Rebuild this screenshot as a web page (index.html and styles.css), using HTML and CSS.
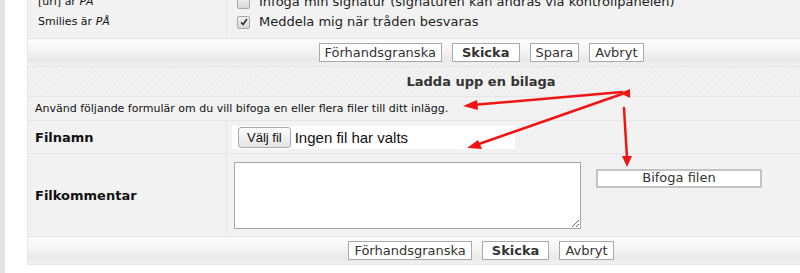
FILE: index.html
```html
<!DOCTYPE html>
<html>
<head>
<meta charset="UTF-8">
<title>Ladda upp en bilaga</title>
<link rel="stylesheet" href="styles.css">
</head>
<body>
<div class="page">
	<div class="rail"></div>
	<table class="form">
		<colgroup>
			<col class="col_label">
			<col>
		</colgroup>
		<tr class="opts_row">
			<td class="label_cell small">
				<div>[url] är <i>PÅ</i></div>
				<div>Smilies är <i>PÅ</i></div>
			</td>
			<td class="opts_cell">
				<div class="opt"><span class="check"></span>Infoga min signatur (signaturen kan ändras via kontrollpanelen)</div>
				<div class="opt"><span class="check on"><svg viewBox="0 0 12 12" width="10" height="10"><path d="M2.5 6.5 L5 9 L9.5 2.5" fill="none" stroke="#333" stroke-width="2"/></svg></span>Meddela mig när tråden besvaras</div>
			</td>
		</tr>
		<tr class="btn_row">
			<td colspan="2">
				<div class="buttons">
					<button class="btn">Förhandsgranska</button>
					<button class="btn bold">Skicka</button>
					<button class="btn">Spara</button>
					<button class="btn">Avbryt</button>
				</div>
			</td>
		</tr>
		<tr class="head_row">
			<th colspan="2">Ladda upp en bilaga</th>
		</tr>
		<tr class="desc_row">
			<td colspan="2" class="small">Använd följande formulär om du vill bifoga en eller flera filer till ditt inlägg.</td>
		</tr>
		<tr class="file_row">
			<td class="label_cell"><b>Filnamn</b></td>
			<td class="field_cell">
				<div class="file_box"><span class="file_btn">Välj fil</span><span class="file_txt">Ingen fil har valts</span></div>
			</td>
		</tr>
		<tr class="comment_row">
			<td class="label_cell"><b>Filkommentar</b></td>
			<td class="field_cell">
				<div class="comment_wrap">
					<textarea class="comment"></textarea>
					<button class="btn wide">Bifoga filen</button>
				</div>
			</td>
		</tr>
		<tr class="btn_row last">
			<td colspan="2">
				<div class="buttons">
					<button class="btn">Förhandsgranska</button>
					<button class="btn bold">Skicka</button>
					<button class="btn">Avbryt</button>
				</div>
			</td>
		</tr>
	</table>
</div>

<svg class="arrows" width="800" height="273" viewBox="0 0 800 273">
	<g stroke="#f01414" stroke-width="2.5" fill="none" stroke-linecap="round">
		<path d="M622 92 L472 105"/>
		<path d="M622 94 L476 145"/>
		<path d="M624 108 L627 158"/>
	</g>
	<g fill="#f01414">
		<polygon points="463,106 477,100 478,110"/>
		<polygon points="467,148 478,140 482,149"/>
		<polygon points="627,167 622,156 632,156"/>
		<polygon points="620,93 630,89 630,98"/>
	</g>
</svg>
</body>
</html>
```
FILE: styles.css
```css
body{
	margin: 0px;
	padding: 0px;
	background-color: white;
	overflow: hidden;
	font-family: "DejaVu Sans", Verdana, sans-serif;
	color: #111;
}

.page{
	display: flex;
	align-items: flex-start;
	gap: 22px;
	margin-top: -15px;
}

.rail{
	width: 5px;
	height: 320px;
	flex: none;
	background-color: #e4e4e4;
}

.arrows{
	position: absolute;
	top: 0px;
	left: 0px;
	pointer-events: none;
}

.form{
	flex: none;
	width: 908px;
	border-collapse: collapse;
	border: 1px solid #e0e0e0;
	table-layout: fixed;
}

.col_label{
	width: 199px;
}

.form td, .form th{
	border: 1px solid #e6e6e6;
	background-color: #f2f2f2;
	padding: 0px;
	vertical-align: middle;
}

.small{
	font-size: 11px;
}

.label_cell{
	padding-left: 7px !important;
}

.opts_row td{
	padding: 6px 10px !important;
	line-height: 20px;
	height: 40px;
}

.opts_cell{
	font-size: 13px;
	color: #222;
}

.opt{
	display: flex;
	align-items: center;
	gap: 9px;
}

.check{
	width: 11px;
	height: 11px;
	border: 1px solid #a8a8a8;
	border-radius: 2px;
	background: linear-gradient(#f4f4f4, #d8d8d8);
	display: flex;
	align-items: center;
	justify-content: center;
}

.btn_row td{
	height: 27px;
	background: linear-gradient(#fdfdfd, #f3f3f3 45%, #e9e9e9 75%, #f1f1f1);
}

.btn_row.last td{
	height: 27px;
}

.buttons{
	display: flex;
	justify-content: center;
	gap: 10px;
}

.btn{
	font-family: "DejaVu Sans", Verdana, sans-serif;
	font-size: 13px;
	color: #333;
	background-color: white;
	border: 1px solid #a9a9a9;
	padding: 0px 5px;
	height: 19px;
	line-height: 16px;
}

.bold{
	font-weight: bold;
	padding: 0px 9px;
}

.head_row th{
	height: 29px;
	font-size: 13px;
	color: #333;
	background: repeating-linear-gradient(135deg, #ededed 0px, #ededed 2px, #f4f4f4 2px, #f4f4f4 4px);
}

.desc_row td{
	height: 23px;
	padding-left: 7px;
	color: #111;
}

.file_row td{
	height: 32px;
	font-size: 13px;
}

.field_cell{
	padding-left: 5px !important;
}

.file_box{
	width: 283px;
	height: 23px;
	background-color: white;
	display: flex;
	align-items: center;
	gap: 4px;
}

.file_btn{
	font-family: "Liberation Sans", Arial, sans-serif;
	font-size: 13px;
	color: #111;
	height: 19px;
	line-height: 19px;
	padding: 0px 8px;
	margin-left: 6px;
	border: 1px solid #aaa;
	border-radius: 3px;
	background: linear-gradient(#fdfdfd, #e4e4e4);
}

.file_txt{
	font-family: "Liberation Sans", Arial, sans-serif;
	font-size: 15px;
	color: #111;
}

.comment_row td{
	height: 82px;
}

.comment_row .label_cell{
	font-size: 13px;
}

.file_row .label_cell{
	font-size: 13px;
}

.comment_wrap{
	display: flex;
	align-items: flex-start;
	gap: 15px;
	padding-left: 2px;
}

.comment{
	width: 347px;
	height: 67px;
	box-sizing: border-box;
	border: 1px solid #a6a6a6;
	margin: 0px;
	padding: 2px;
	resize: both;
}

.wide{
	width: 166px;
	margin-top: 7px;
	border: 2px solid #c4c4c4;
	font-size: 13px;
	height: 19px;
	line-height: 14px;
}
```
